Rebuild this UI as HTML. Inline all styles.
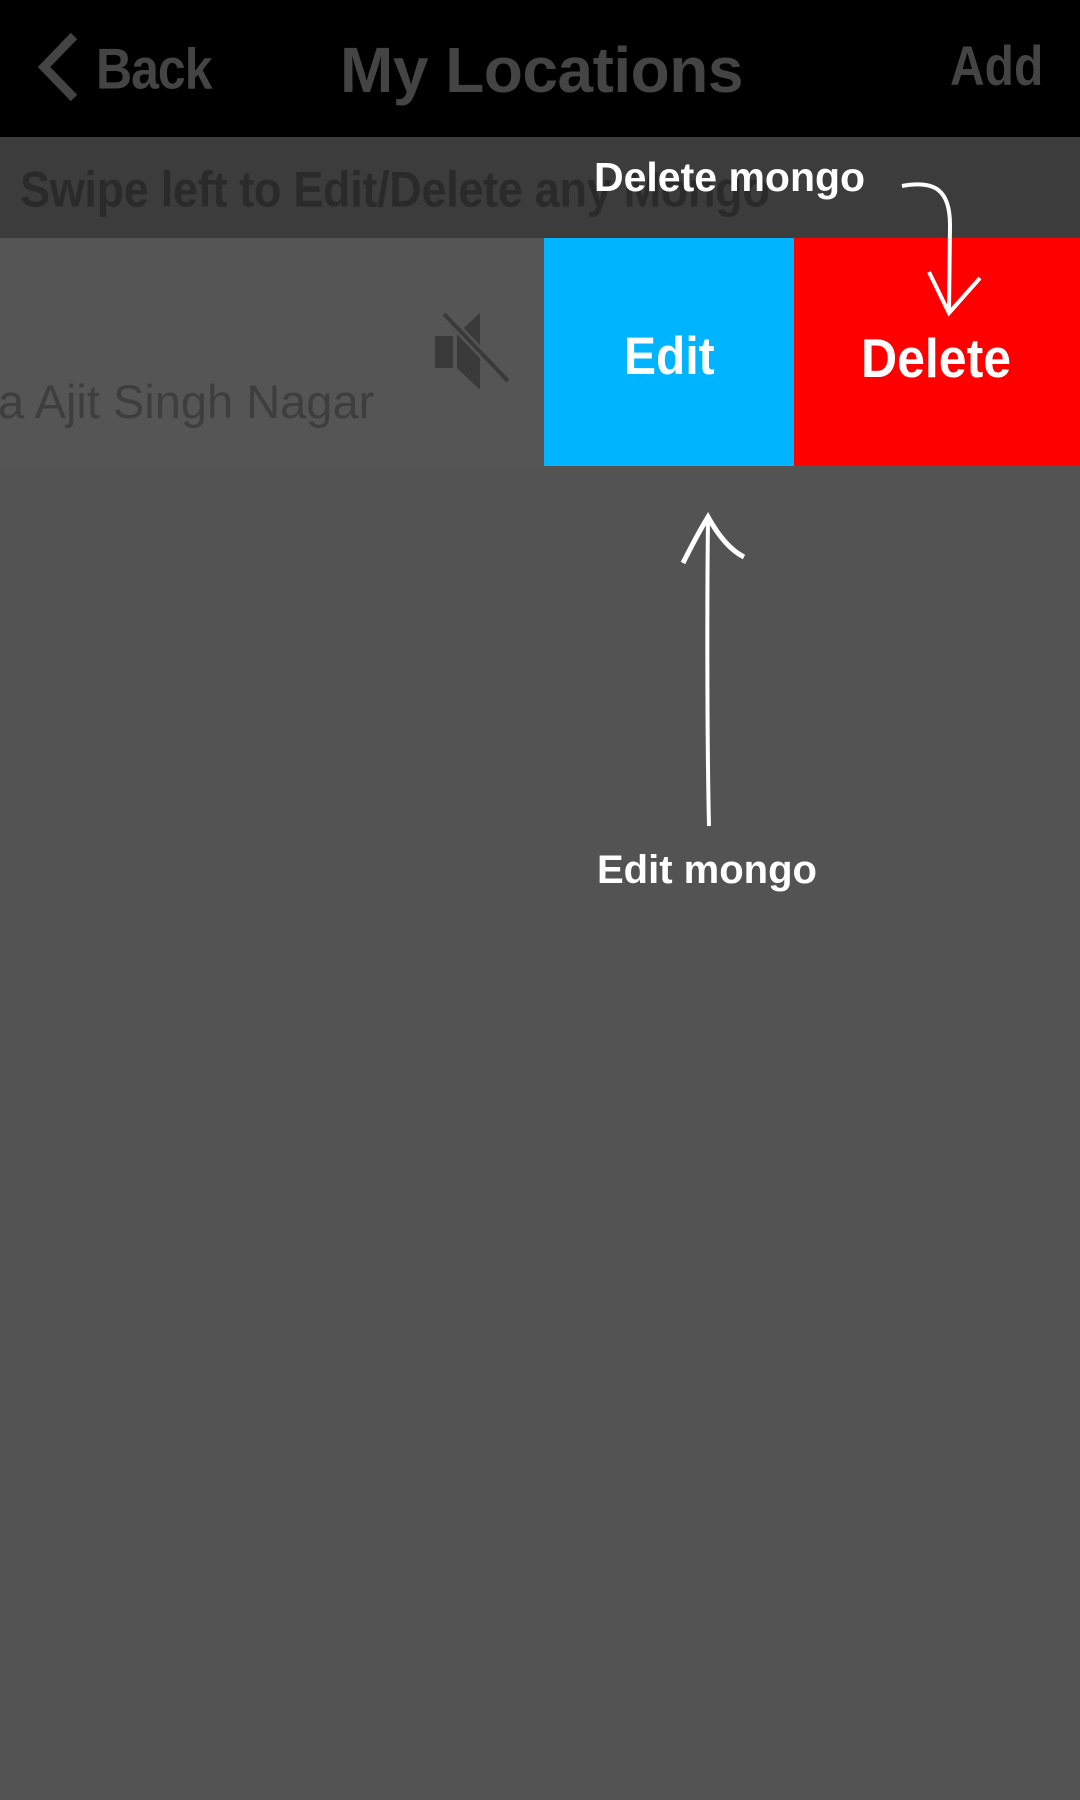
<!DOCTYPE html>
<html><head><meta charset="utf-8"><style>
*{margin:0;padding:0;box-sizing:border-box}
body{width:1080px;height:1800px;background:#535353;position:relative;overflow:hidden;font-family:"Liberation Sans",sans-serif}
.a{position:absolute;white-space:nowrap;line-height:1}
</style></head><body>
<div class="a" style="left:0;top:0;width:1080px;height:137px;background:#000"></div>
<div class="a" style="left:0;top:137px;width:1080px;height:101px;background:#3c3c3c"></div>
<div class="a" style="left:0;top:238px;width:544px;height:228px;background:#555"></div>
<div class="a" style="left:544px;top:238px;width:250px;height:228px;background:#00b4ff"></div>
<div class="a" style="left:794px;top:238px;width:286px;height:228px;background:#ff0000"></div>

<svg class="a" style="left:0;top:0" width="1080" height="900">
<polyline points="74,36 44,67 74,98" fill="none" stroke="#444" stroke-width="9"/>
<polygon points="435,336 453,336 453,368 435,368" fill="#3a3a3a"/>
<polygon points="457,334 480,313 480,390 457,368" fill="#3a3a3a"/>
<line x1="444" y1="314" x2="508" y2="381" stroke="#555" stroke-width="9"/>
<line x1="444" y1="314" x2="508" y2="381" stroke="#3a3a3a" stroke-width="4"/>
<path d="M902,186 C935,180 950,190 950,225 L949,312" fill="none" stroke="#fff" stroke-width="4"/>
<path d="M929,272 L949,313 L980,278" fill="none" stroke="#fff" stroke-width="4"/>
<path d="M709,826 C707,740 707,600 708,520" fill="none" stroke="#fff" stroke-width="4"/>
<path d="M683,563 C692,545 700,530 708,517 C718,535 730,550 744,557" fill="none" stroke="#fff" stroke-width="5"/>
</svg>

<div class="a" style="left:96px;top:40px;font-size:50px;font-weight:bold;color:#444;transform:scaleY(1.15);transform-origin:top left;letter-spacing:-1px">Back</div>
<div class="a" style="left:340px;top:38px;font-size:64px;font-weight:bold;color:#444;letter-spacing:-0.5px">My Locations</div>
<div class="a" style="left:950px;top:40px;font-size:48px;font-weight:bold;color:#444;transform:scaleY(1.15);transform-origin:top left">Add</div>
<div class="a" style="left:20px;top:164px;font-size:45px;font-weight:bold;color:#2a2a2a;transform:scaleY(1.12);transform-origin:top left;letter-spacing:-0.3px">Swipe left to Edit/Delete any Mongo</div>
<div class="a" style="left:-2px;top:378px;font-size:47px;color:#3e3e3e">a Ajit Singh Nagar</div>
<div class="a" style="left:624px;top:331px;font-size:48px;font-weight:bold;color:#fff;transform:scaleY(1.1);transform-origin:top left">Edit</div>
<div class="a" style="left:861px;top:331px;font-size:50px;font-weight:bold;color:#fff;transform:scaleY(1.1);transform-origin:top left">Delete</div>
<div class="a" style="left:594px;top:157px;font-size:41px;font-weight:bold;color:#fff">Delete mongo</div>
<div class="a" style="left:597px;top:850px;font-size:40px;font-weight:bold;color:#fff">Edit mongo</div>
</body></html>
